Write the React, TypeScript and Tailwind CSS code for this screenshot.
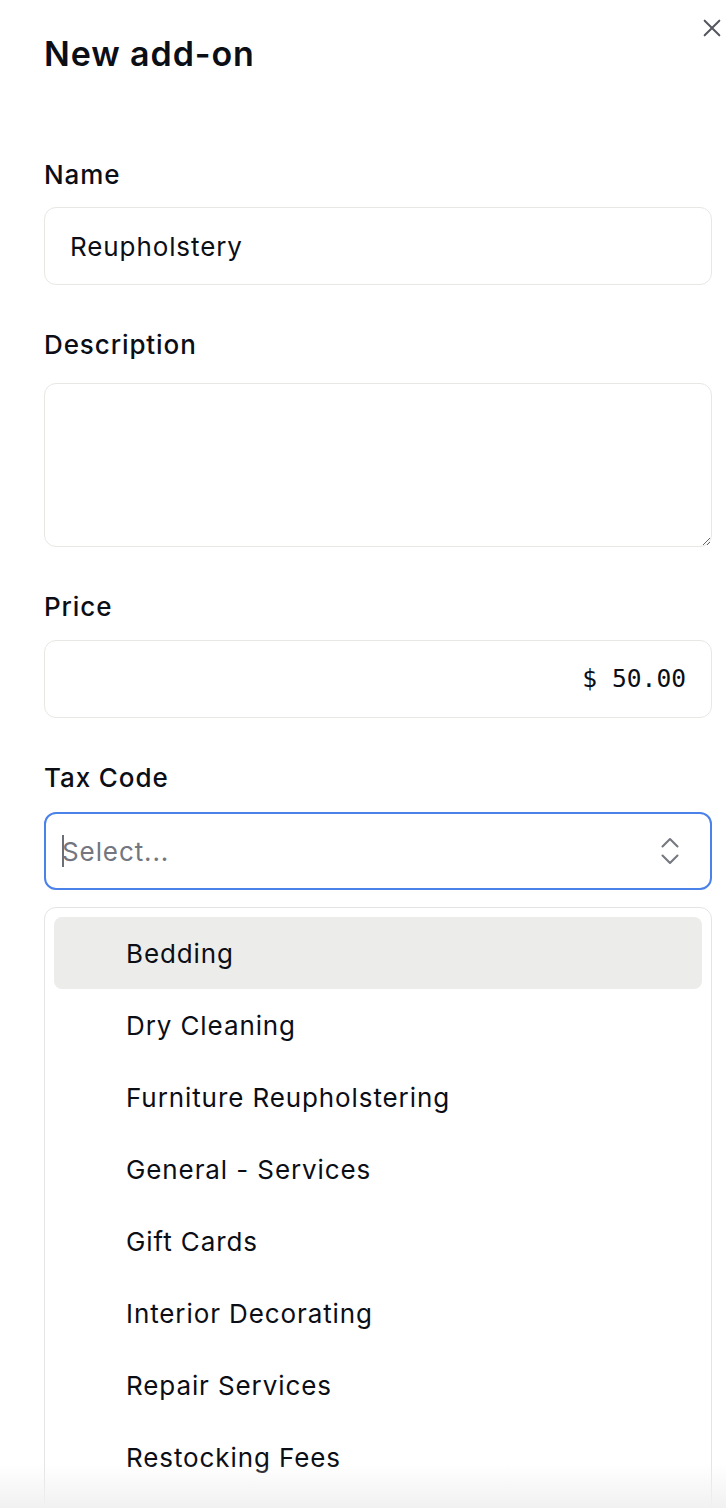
import React from "react";

const items = [
  "Bedding",
  "Dry Cleaning",
  "Furniture Reupholstering",
  "General - Services",
  "Gift Cards",
  "Interior Decorating",
  "Repair Services",
  "Restocking Fees",
];

export default function App() {
  return (
    <div className="relative h-[1508px] overflow-hidden bg-white font-['Inter','Noto_Sans',sans-serif] text-[#0c0e16]">
      <button className="absolute right-[3px] top-[17px] text-[#55565e]" aria-label="Close">
        <svg width="22" height="22" viewBox="0 0 24 24" fill="none" stroke="currentColor" strokeWidth="2.2" strokeLinecap="round">
          <path d="M4 4l16 16M20 4L4 20" />
        </svg>
      </button>

      <div className="pl-[44px] pr-[14px] pt-[33px]">
        <h1 className="text-[34px] font-semibold leading-[42px] tracking-[0.9px]">New add-on</h1>

        <div className="mt-[80px] flex flex-col gap-[40px]">
          <div className="flex flex-col">
            <label className="text-[26px] font-medium leading-[39px] tracking-[0.9px]">Name</label>
            <div className="mt-[13px] flex h-[78px] items-center rounded-[12px] border border-[#e7e7e4] px-[25px] text-[26px] tracking-[0.9px]">
              Reupholstery
            </div>
          </div>

          <div className="flex flex-col">
            <label className="text-[26px] font-medium leading-[39px] tracking-[0.9px]">Description</label>
            <textarea
              className="mt-[19px] block h-[164px] w-full resize-y rounded-[12px] border border-[#e7e7e4] px-[25px] py-[16px] text-[26px] outline-none"
              defaultValue=""
            />
          </div>

          <div className="flex flex-col">
            <label className="text-[26px] font-medium leading-[39px] tracking-[0.9px]">Price</label>
            <div className="mt-[14px] flex h-[78px] items-center justify-end rounded-[12px] border border-[#e7e7e4] px-[25px] font-['DejaVu_Sans_Mono',monospace] text-[24.6px]">
              $ 50.00
            </div>
          </div>

          <div className="flex flex-col">
            <label className="text-[26px] font-medium leading-[39px] tracking-[0.9px]">Tax Code</label>
            <div className="mt-[15px] flex h-[78px] items-center rounded-[12px] border-2 border-[#4b82ea] pl-[16px] pr-[22px]">
              <div className="relative flex flex-1 items-center">
                <span className="absolute left-0 top-1/2 h-[32px] w-[2px] -translate-y-1/2 bg-[#6b6f78]" />
                <span className="text-[26px] tracking-[0.9px] text-[#73767f]">Select...</span>
              </div>
              <svg width="36" height="36" viewBox="0 0 24 24" fill="none" stroke="#767880" strokeWidth="1.4" strokeLinecap="round" strokeLinejoin="round">
                <path d="m7 15 5 5 5-5" />
                <path d="m7 9 5-5 5 5" />
              </svg>
            </div>
          </div>
        </div>

        <div className="mt-[17px] rounded-[12px] border border-[#e4e4e7] px-[9px] pt-[9px] pb-[60px]">
          {items.map((it, i) => (
            <div
              key={it}
              className={`flex h-[72px] items-center rounded-[8px] pl-[72px] text-[26px] tracking-[0.9px] ${i === 0 ? "bg-[#ecedea]" : ""}`}
            >
              {it}
            </div>
          ))}
        </div>
      </div>

      <div className="pointer-events-none absolute bottom-0 left-0 right-0 h-[44px] bg-gradient-to-b from-white/0 to-[#f1f1f1]" />
    </div>
  );
}
